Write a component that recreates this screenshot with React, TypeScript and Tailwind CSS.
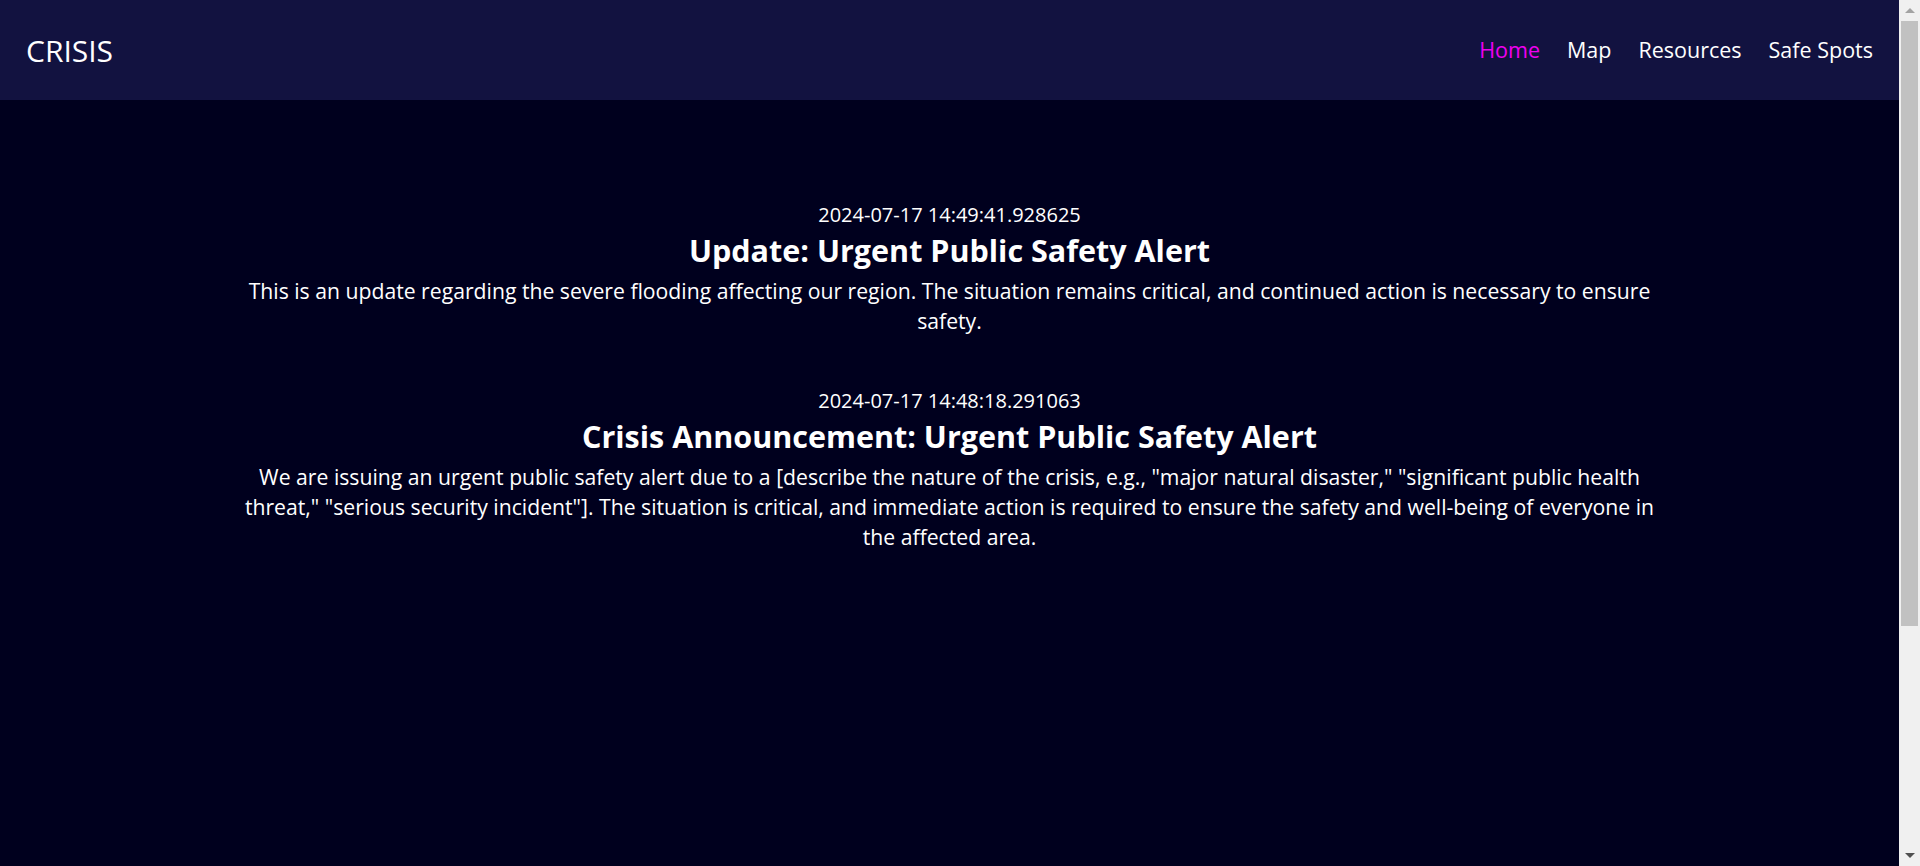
const announcements = [
  {
    time: '2024-07-17 14:49:41.928625',
    title: 'Update: Urgent Public Safety Alert',
    body: 'This is an update regarding the severe flooding affecting our region. The situation remains critical, and continued action is necessary to ensure safety.',
  },
  {
    time: '2024-07-17 14:48:18.291063',
    title: 'Crisis Announcement: Urgent Public Safety Alert',
    body: 'We are issuing an urgent public safety alert due to a [describe the nature of the crisis, e.g., "major natural disaster," "significant public health threat," "serious security incident"]. The situation is critical, and immediate action is required to ensure the safety and well-being of everyone in the affected area.',
  },
];

const links = ['Home', 'Map', 'Resources', 'Safe Spots'];

function Scrollbar() {
  // stand-in for the browser's scrollbar
  return (
    <div className="fixed right-0 top-0 h-screen w-[21px] bg-[#f0f0f0] flex flex-col items-center">
      <div className="h-[21px] flex items-center justify-center">
        <div className="w-0 h-0 border-x-[5px] border-x-transparent border-b-[5px] border-b-[#a3a3a3]" />
      </div>
      <div className="w-[17px] h-[605px] bg-[#c1c1c1]" />
      <div className="flex-1" />
      <div className="h-[21px] flex items-center justify-center">
        <div className="w-0 h-0 border-x-[5px] border-x-transparent border-t-[5px] border-t-[#505050]" />
      </div>
    </div>
  );
}

export default function App() {
  return (
    <div
      className="min-h-[1190px] bg-[#00001e] text-white"
      style={{ fontFamily: '"Open Sans", "Liberation Sans", sans-serif' }}
    >
      <div className="mr-[21px]">
        {/* Navbar */}
        <header className="h-[100px] bg-[#121240] flex items-center justify-between pl-[26px] pr-[26px]">
          <div className="text-[30px] font-normal">CRISIS</div>
          <nav className="flex items-center gap-[27px] text-[21.5px]">
            {links.map((l) => (
              <a
                key={l}
                href="#"
                className={l === 'Home' ? 'text-[#f000f0]' : 'text-white'}
              >
                {l}
              </a>
            ))}
          </nav>
        </header>

        <main className="pt-[101px]">
          <div className="w-3/4 mx-auto flex flex-col gap-[51px] text-center">
            {announcements.map((a) => (
              <article key={a.time}>
                <p className="text-[20px] leading-[27px]">{a.time}</p>
                <h2 className="text-[30.5px] leading-[45px] font-bold">{a.title}</h2>
                <p className="text-[21.2px] leading-[30px] mt-[3px]">{a.body}</p>
              </article>
            ))}
          </div>
        </main>
      </div>
      <Scrollbar />
    </div>
  );
}
